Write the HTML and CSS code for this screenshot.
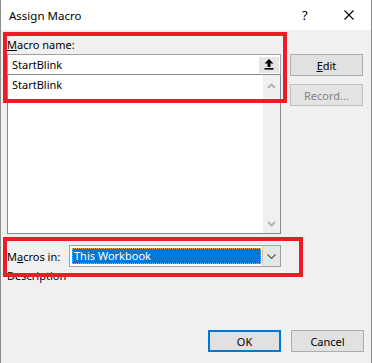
FILE: index.html
```html
<!DOCTYPE html>
<html>
<head>
  <meta charset="UTF-8">
  <title>Assign Macro</title>
  <link rel="stylesheet" href="styles.css">
</head>
<body>
<div class="dialog">
  <div class="titlebar">
    <span class="title">Assign Macro</span>
    <span class="help">?</span>
    <span class="close">
      <svg width="10" height="10" viewBox="0 0 10 10"><path d="M0.5 0.5 L9.5 9.5 M9.5 0.5 L0.5 9.5" stroke="#000" stroke-width="1.1" fill="none"/></svg>
    </span>
  </div>

  <div class="content">
    <div class="main">
      <div class="left">
        <div class="lbl"><u>M</u>acro name:</div>
        <div class="namebox">
          <span class="name-text">StartBlink</span>
          <span class="upbtn">
            <svg width="10" height="11" viewBox="0 0 10 11"><path d="M5 0 L9.5 4.5 H6.5 V8 H3.5 V4.5 H0.5 Z" fill="#000"/><rect x="0.5" y="9" width="9" height="1.6" fill="#000"/></svg>
          </span>
        </div>
        <div class="listbox">
          <div class="items">
            <div class="item">StartBlink</div>
          </div>
          <div class="vscroll">
            <svg width="9" height="6" viewBox="0 0 9 6"><path d="M1 5 L4.5 1.5 L8 5" stroke="#b4b4b4" stroke-width="2" fill="none"/></svg>
            <svg width="9" height="6" viewBox="0 0 9 6"><path d="M1 1 L4.5 4.5 L8 1" stroke="#b4b4b4" stroke-width="2" fill="none"/></svg>
          </div>
        </div>
        <div class="macros-row">
          <div class="row-lbl">M<u>a</u>cros in:</div>
          <div class="select">
            <div class="sel-value"><span class="sel-text">This Workbook</span></div>
            <div class="drop">
              <svg width="9" height="5" viewBox="0 0 9 5"><path d="M0.5 0.5 L4.5 4.5 L8.5 0.5" stroke="#555" stroke-width="1.1" fill="none"/></svg>
            </div>
          </div>
        </div>
        <div class="desc">Description</div>
      </div>
      <div class="side">
        <button class="btn"><u>E</u>dit</button>
        <button class="btn" disabled>Record...</button>
      </div>
    </div>
    <div class="footer">
      <button class="btn btn-default">OK</button>
      <button class="btn">Cancel</button>
    </div>
  </div>

  <!-- red highlight frames drawn over the dialog -->
  <div class="mark mark-name"></div>
  <div class="mark mark-macros"></div>
</div>
</body>
</html>
```

FILE: styles.css
```css
body {
  margin: 0;
  background-color: #d4d4d4;
  font-family: "Noto Sans", "Liberation Sans", sans-serif;
  font-size: 11px;
  color: #000;
}
.dialog {
  position: relative;
  width: 370px;
  height: 363px;
  border-left: 1px solid #8c8c8c;
  border-right: 1px solid #8c8c8c;
  display: flex;
  flex-direction: column;
  background-color: #f0f0f0;
}
.titlebar {
  height: 30px;
  background-color: #fff;
  display: flex;
  align-items: center;
  font-size: 11.5px;
}
.title {
  padding-left: 8px;
  flex: 1;
}
.help {
  width: 10px;
  font-size: 13px;
  margin-right: 32px;
}
.close {
  display: flex;
  margin-right: 17px;
}
.content {
  flex: 1;
  display: flex;
  flex-direction: column;
  padding: 7px 7px 11px 6px;
}
.main {
  display: flex;
  gap: 9px;
}
.left {
  width: 274px;
}
.lbl {
  line-height: 16px;
  margin-bottom: 1px;
}
.namebox {
  height: 19px;
  border: 1px solid #a3a3a3;
  background-color: #fff;
  display: flex;
  align-items: center;
  justify-content: space-between;
}
.name-text {
  padding-left: 4px;
}
.upbtn {
  width: 20px;
  height: 16px;
  margin-right: 1px;
  background-color: #e6e6e6;
  display: flex;
  align-items: center;
  justify-content: center;
}
.listbox {
  margin-top: -1px;
  height: 158px;
  border: 1px solid #828790;
  background-color: #fff;
  display: flex;
}
.items {
  flex: 1;
  padding: 2px 0 0 4px;
}
.item {
  line-height: 15px;
}
.vscroll {
  width: 17px;
  background-color: #f0f0f0;
  display: flex;
  flex-direction: column;
  justify-content: space-between;
  align-items: center;
  padding: 8px 0 6px;
}
.macros-row {
  margin-top: 11px;
  display: flex;
  align-items: center;
}
.row-lbl {
  width: 62px;
}
.select {
  width: 210px;
  height: 20px;
  border: 1px solid #a0a0a0;
  background-color: #fff;
  display: flex;
}
.sel-value {
  flex: 1;
  padding: 2px 1px 2px 2px;
  display: flex;
}
.sel-text {
  flex: 1;
  background-color: #0078d7;
  color: #fff;
  outline: 1px dotted #f4a340;
  outline-offset: -1px;
  line-height: 16px;
  padding-left: 2px;
}
.drop {
  width: 17px;
  background-color: #e6e6e6;
  border-left: 1px solid #c8c8c8;
  display: flex;
  align-items: center;
  justify-content: center;
}
.desc {
  line-height: 16px;
  margin-top: 1px;
}
.side {
  display: flex;
  flex-direction: column;
  gap: 8px;
  padding-top: 17px;
}
.btn {
  width: 73px;
  height: 22px;
  border: 1px solid #adadad;
  background-color: #e1e1e1;
  font-family: "Noto Sans", "Liberation Sans", sans-serif;
  font-size: 11px;
  color: #000;
  padding: 0;
}
.btn:disabled {
  color: #838383;
  border-color: #bfbfbf;
  background-color: #e4e4e4;
}
.btn-default {
  border: 2px solid #0078d7;
}
.footer {
  margin-top: auto;
  display: flex;
  justify-content: flex-end;
  gap: 10px;
}
.mark {
  position: absolute;
  border: 4px solid #ed1c24;
  box-sizing: border-box;
}
.mark-name {
  left: 2px;
  top: 32px;
  width: 284px;
  height: 71px;
}
.mark-macros {
  left: 2px;
  top: 237px;
  width: 300px;
  height: 40px;
}
```
